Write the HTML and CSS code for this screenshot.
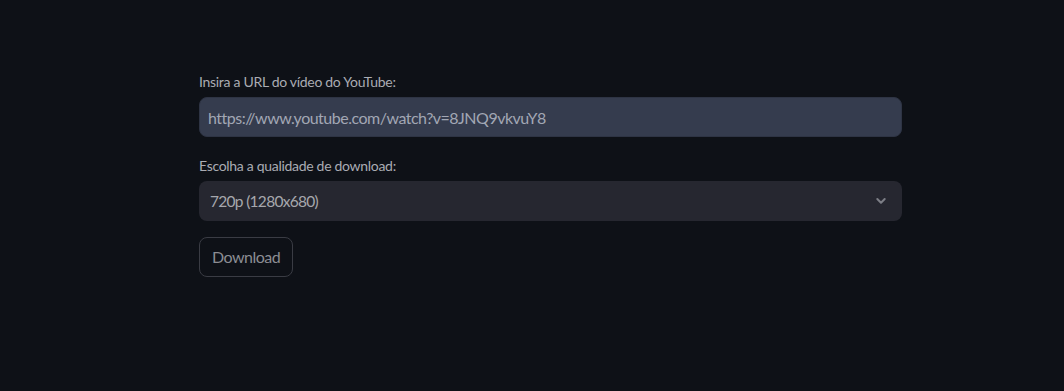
FILE: index.html
```html
<!DOCTYPE html>
<html lang="pt">
<head>
<meta charset="utf-8">
<title>YouTube Downloader</title>
<link rel="stylesheet" href="styles.css">
</head>
<body>
<main class="main">
  <div class="field">
    <label class="label" for="url">Insira a URL do vídeo do YouTube:</label>
    <div class="input-box">
      <input id="url" class="input" type="text" value="https://www.youtube.com/watch?v=8JNQ9vkvuY8">
    </div>
  </div>
  <div class="field">
    <div class="label">Escolha a qualidade de download:</div>
    <div class="select">
      <span class="select-value">720p (1280x680)</span>
      <svg class="chevron" width="12" height="12" viewBox="0 0 12 12" aria-hidden="true">
        <path d="M2.3 4 L6 7.7 L9.7 4" fill="none" stroke="#7c7e86" stroke-width="2" stroke-linecap="round" stroke-linejoin="round"/>
      </svg>
    </div>
  </div>
  <div class="field">
    <button class="button" type="button">Download</button>
  </div>
</main>
</body>
</html>
```
FILE: styles.css
```css
html, body {
  margin: 0;
  padding: 0;
  background: #0e1117;
  height: 100%;
}
body {
  font-family: "Lato", "Liberation Sans", sans-serif;
}
.main {
  box-sizing: border-box;
  width: 902px;
  padding: 69px 0 0 199px;
  display: flex;
  flex-direction: column;
  gap: 16px;
}
.field {
  display: flex;
  flex-direction: column;
}
.label {
  box-sizing: border-box;
  height: 24px;
  padding-top: 2px;
  margin-bottom: 4px;
  font-size: 14px;
  line-height: 22px;
  letter-spacing: -0.3px;
  color: #aaacb3;
}
.input-box {
  box-sizing: border-box;
  height: 40px;
  border: 1px solid #2e3444;
  border-radius: 8px;
  background: #353c4e;
  display: flex;
  align-items: center;
}
.input {
  flex: 1;
  border: 0;
  outline: 0;
  background: transparent;
  padding: 0 8px;
  font-family: inherit;
  font-size: 16px;
  letter-spacing: -0.5px;
  color: #a2a7b4;
}
.select {
  box-sizing: border-box;
  height: 40px;
  border-radius: 8px;
  background: #262730;
  display: flex;
  align-items: center;
  justify-content: space-between;
  padding: 0 15px 0 11px;
}
.select-value {
  font-size: 15.5px;
  letter-spacing: -0.7px;
  color: #a6a7ad;
}
.chevron {
  display: block;
}
.button {
  align-self: flex-start;
  box-sizing: border-box;
  height: 40px;
  padding: 0 12px 2px;
  border: 1px solid #3a3c44;
  border-radius: 8px;
  background: #0e1117;
  font-family: inherit;
  font-size: 16px;
  letter-spacing: -0.5px;
  color: #8b8d93;
}
```
